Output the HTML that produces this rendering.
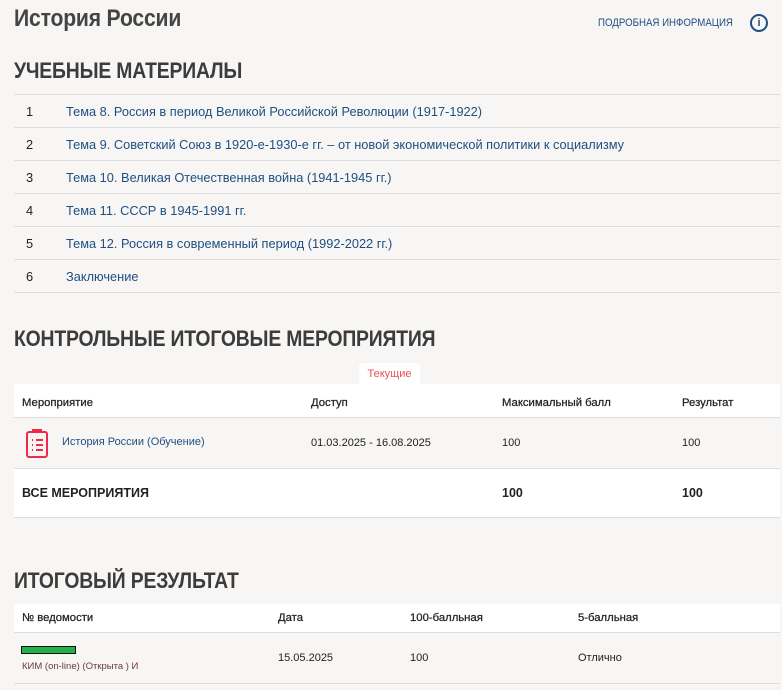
<!DOCTYPE html><html><head><meta charset="utf-8"><style>
body{margin:0;background:#f7f6f4;font-family:"Liberation Sans",sans-serif;color:#222;width:782px;height:690px;overflow:hidden;position:relative}
.a{position:absolute;white-space:nowrap}
.h{font-weight:bold;color:#3c3c3c;transform:scaleX(.88);transform-origin:left center;letter-spacing:-0.2px}
.row{position:absolute;left:14px;width:766px;border-top:1px solid #ddd;height:32px;font-size:12.8px}
.row span{position:absolute;top:9px}
.lk{color:#1f4f82}
.t{position:absolute;left:14px;width:766px;background:#fff;font-size:11px}
.t span{position:absolute}
.hd span{font-size:11.3px;color:#222;-webkit-text-stroke:0.25px #222}
</style></head><body>
<div class="a h" style="left:14px;top:5px;font-size:24px;color:#444">История России</div>
<div class="a" style="left:598px;top:17px;font-size:11px;color:#1f4f82;transform:scaleX(.88);transform-origin:left">ПОДРОБНАЯ ИНФОРМАЦИЯ</div>
<div class="a" style="left:750px;top:14px;width:14px;height:14px;border:2px solid #1f4f82;border-radius:50%;color:#1f4f82;font-size:11px;font-weight:bold;text-align:center;line-height:14px">i</div>
<div class="a h" style="left:14px;top:58px;font-size:22px">УЧЕБНЫЕ МАТЕРИАЛЫ</div>
<div class="row" style="top:94px"><span style="left:12px">1</span><span class="lk" style="left:52px">Тема 8. Россия в период Великой Российской Революции (1917-1922)</span></div>
<div class="row" style="top:127px"><span style="left:12px">2</span><span class="lk" style="left:52px">Тема 9. Советский Союз в 1920-е-1930-е гг. – от новой экономической политики к социализму</span></div>
<div class="row" style="top:160px"><span style="left:12px">3</span><span class="lk" style="left:52px">Тема 10. Великая Отечественная война (1941-1945 гг.)</span></div>
<div class="row" style="top:193px"><span style="left:12px">4</span><span class="lk" style="left:52px">Тема 11. СССР в 1945-1991 гг.</span></div>
<div class="row" style="top:226px"><span style="left:12px">5</span><span class="lk" style="left:52px">Тема 12. Россия в современный период (1992-2022 гг.)</span></div>
<div class="row" style="top:259px;border-bottom:1px solid #ddd"><span style="left:12px">6</span><span class="lk" style="left:52px">Заключение</span></div>
<div class="a h" style="left:14px;top:326px;font-size:22px">КОНТРОЛЬНЫЕ ИТОГОВЫЕ МЕРОПРИЯТИЯ</div>
<div class="a" style="left:359px;top:363px;width:61px;height:22px;background:#fff;border-radius:4px 4px 0 0;color:#e8525a;font-size:11px;text-align:center;line-height:22px">Текущие</div>
<div class="t hd" style="top:384px;height:33px;border-bottom:1px solid #ddd"><span style="left:8px;top:13px">Мероприятие</span><span style="left:297px;top:13px">Доступ</span><span style="left:488px;top:13px">Максимальный балл</span><span style="left:668px;top:13px">Результат</span></div>
<div class="t" style="top:418px;height:50px;background:#f7f6f4;border-bottom:1px solid #ddd">
<svg style="position:absolute;left:11px;top:9px" width="24" height="32" viewBox="0 0 24 32" fill="none" stroke="#f0284a" stroke-width="2"><rect x="2" y="5" width="20" height="25" rx="2"/><path d="M8 5V3h8v2M7 13h1M7 18h1M7 23h1M11 13h7M11 18h7M11 23h7"/></svg>
<span class="lk" style="left:48px;top:18px">История России (Обучение)</span><span style="left:297px;top:19px">01.03.2025 - 16.08.2025</span><span style="left:488px;top:19px">100</span><span style="left:668px;top:19px">100</span></div>
<div class="t" style="top:469px;height:48px;border-bottom:1px solid #ddd;font-size:12.5px;font-weight:bold"><span style="left:8px;top:17px">ВСЕ МЕРОПРИЯТИЯ</span><span style="left:488px;top:17px">100</span><span style="left:668px;top:17px">100</span></div>
<div class="a h" style="left:14px;top:568px;font-size:22px">ИТОГОВЫЙ РЕЗУЛЬТАТ</div>
<div class="t hd" style="top:604px;height:28px;border-bottom:1px solid #ddd"><span style="left:8px;top:8px">№ ведомости</span><span style="left:264px;top:8px">Дата</span><span style="left:396px;top:8px">100-балльная</span><span style="left:564px;top:8px">5-балльная</span></div>
<div class="t" style="top:633px;height:50px;background:#f7f6f4;border-bottom:1px solid #ddd">
<div style="position:absolute;left:7px;top:13px;width:53px;height:6px;background:#22b04b;border:1px solid #111"></div>
<span style="left:8px;top:28px;font-size:9.5px;color:#6b3a3a">КИМ (on-line) (Открыта ) И</span><span style="left:264px;top:19px">15.05.2025</span><span style="left:396px;top:19px">100</span><span style="left:564px;top:19px">Отлично</span></div>
</body></html>
